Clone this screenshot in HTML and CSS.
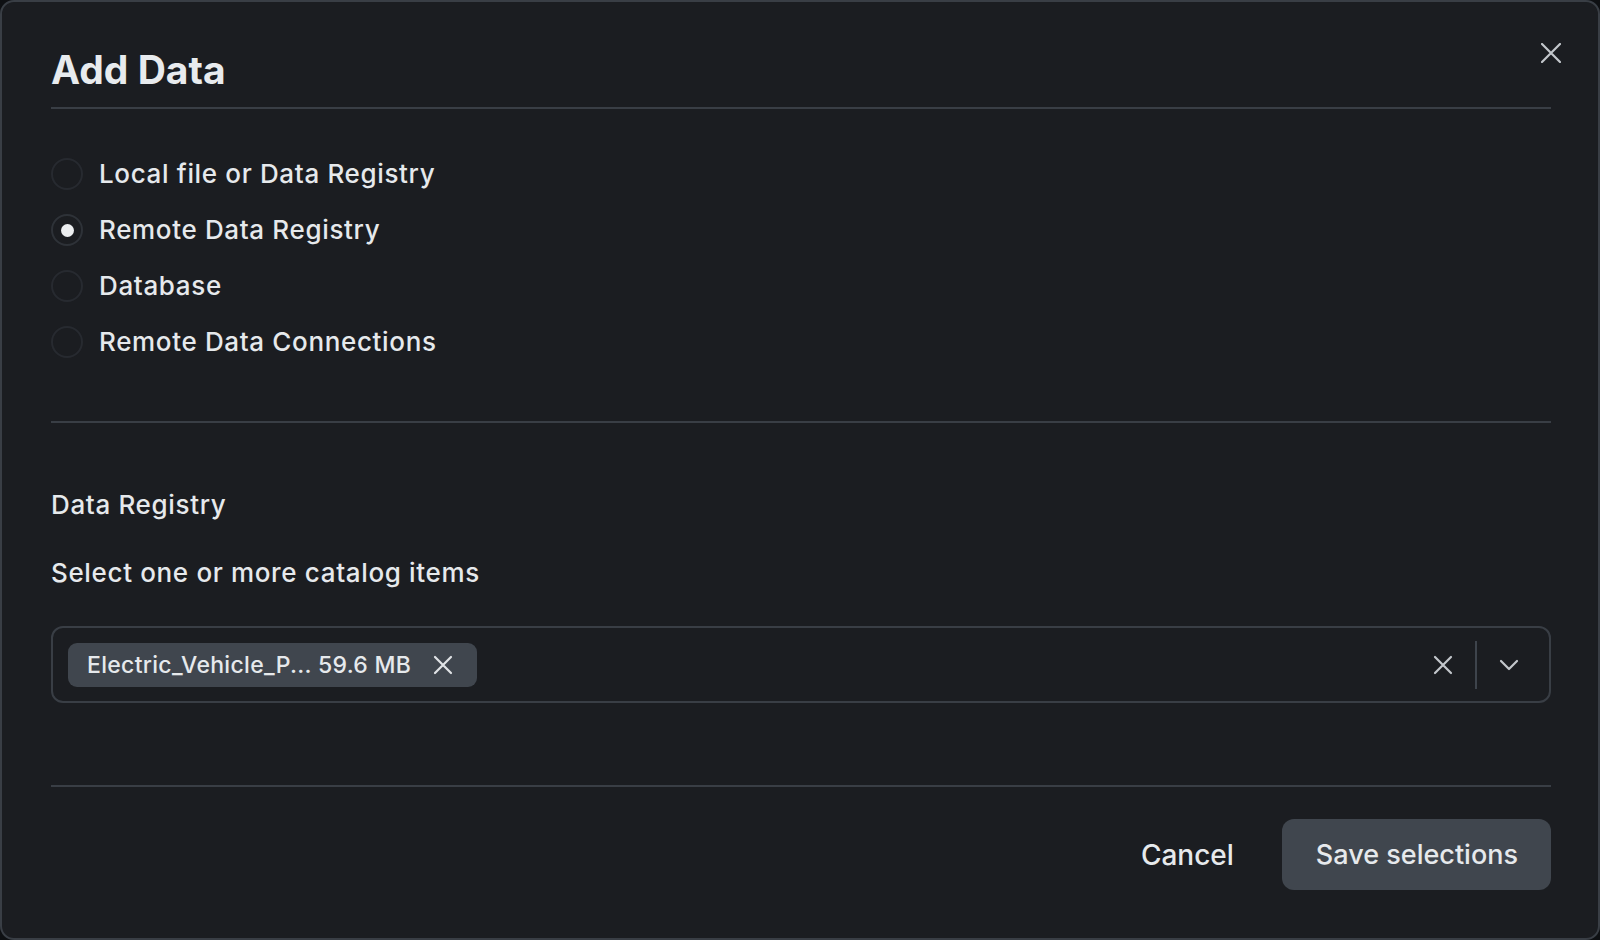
FILE: index.html
```html
<!DOCTYPE html>
<html lang="en">
<head>
<meta charset="utf-8">
<title>Add Data</title>
<link rel="stylesheet" href="styles.css">
</head>
<body>
<div class="modal">
  <header class="modal-header">
    <h1 class="title">Add Data</h1>
    <button class="close" aria-label="Close">
      <svg width="20" height="20" viewBox="0 0 20 20"><path d="M1 1L19 19M19 1L1 19" stroke="currentColor" stroke-width="2.2" stroke-linecap="round"/></svg>
    </button>
  </header>

  <div class="radios">
    <label class="radio"><span class="dot"></span><span class="radio-label">Local file or Data Registry</span></label>
    <label class="radio checked"><span class="dot"></span><span class="radio-label">Remote Data Registry</span></label>
    <label class="radio"><span class="dot"></span><span class="radio-label">Database</span></label>
    <label class="radio"><span class="dot"></span><span class="radio-label">Remote Data Connections</span></label>
  </div>

  <div class="divider"></div>

  <section class="registry">
    <div class="section-title">Data Registry</div>
    <div class="section-sub">Select one or more catalog items</div>
    <div class="select">
      <div class="chips">
        <span class="chip">
          <span class="chip-text">Electric_Vehicle_P... 59.6 MB</span>
          <svg class="chip-x" width="20" height="20" viewBox="0 0 20 20"><path d="M2 2L18 18M18 2L2 18" stroke="currentColor" stroke-width="2.2" stroke-linecap="round"/></svg>
        </span>
      </div>
      <div class="indicators">
        <svg class="clear" width="20" height="20" viewBox="0 0 20 20"><path d="M2 2L18 18M18 2L2 18" stroke="currentColor" stroke-width="2.2" stroke-linecap="round"/></svg>
        <span class="sep"></span>
        <svg class="chev" width="20" height="12" viewBox="0 0 20 12"><path d="M2 2L10 10L18 2" fill="none" stroke="currentColor" stroke-width="2.2" stroke-linecap="round" stroke-linejoin="round"/></svg>
      </div>
    </div>
  </section>

  <div class="divider footer-divider"></div>

  <footer class="footer">
    <button class="btn-text">Cancel</button>
    <button class="btn-primary">Save selections</button>
  </footer>
</div>
</body>
</html>
```

FILE: styles.css
```css
* { box-sizing: border-box; }
html, body { margin: 0; padding: 0; }
body {
  background: #0e1013;
  font-family: Inter, "DejaVu Sans", sans-serif;
  color: #e6e9ec;
  width: 1600px;
  height: 940px;
  overflow: hidden;
}
.modal {
  width: 1600px;
  height: 940px;
  background: #1b1d21;
  border: 2px solid #393e45;
  border-radius: 14px;
  padding: 0 47px 0 49px;
  display: flex;
  flex-direction: column;
}
.modal-header {
  display: flex;
  justify-content: space-between;
  align-items: flex-start;
  padding-top: 39px;
  padding-bottom: 15px;
  border-bottom: 2px solid #393e45;
}
.title {
  margin: 7px 0 0 0;
  font-size: 39px;
  line-height: 44px;
  font-weight: 700;
  letter-spacing: 0;
  color: #e8ebee;
}
.close {
  background: none;
  border: 0;
  padding: 0;
  width: 24px;
  height: 24px;
  margin-right: -12px;
  color: #c3c7cc;
  display: flex;
  align-items: center;
  justify-content: center;
}
.radios {
  margin-top: 37px;
  display: flex;
  flex-direction: column;
}
.radio {
  height: 56px;
  display: flex;
  align-items: center;
  gap: 16px;
}
.dot {
  width: 32px;
  height: 32px;
  border-radius: 50%;
  border: 2px solid #272a30;
  display: flex;
  align-items: center;
  justify-content: center;
}
.radio.checked .dot { border-color: #2e3238; }
.radio.checked .dot::after {
  content: "";
  width: 13px;
  height: 13px;
  border-radius: 50%;
  background: #eceef0;
}
.radio-label,
.section-title,
.section-sub {
  font-size: 26px;
  line-height: 32px;
  font-weight: 500;
  letter-spacing: 0.65px;
  color: #e6e9ec;
}
.divider {
  height: 2px;
  background: #393e45;
  margin-top: 51px;
}
.registry {
  display: flex;
  flex-direction: column;
}
.section-title { margin-top: 66px; }
.section-sub { margin-top: 36px; }
.select {
  margin-top: 37px;
  height: 77px;
  border: 2px solid #393e45;
  border-radius: 12px;
  display: flex;
  align-items: center;
  justify-content: space-between;
  padding: 0 30px 0 15px;
}
.chip {
  display: inline-flex;
  align-items: center;
  height: 44px;
  background: #40464e;
  border-radius: 9px;
  padding: 0 24px 0 19px;
  gap: 22px;
}
.chip-text {
  font-size: 23px;
  font-weight: 500;
  letter-spacing: 0.3px;
  color: #e6e9ec;
}
.chip-x { color: #e0e3e6; }
.indicators {
  display: flex;
  align-items: center;
  color: #c3c7cc;
}
.sep {
  width: 2px;
  height: 48px;
  background: #3e444c;
  margin: 0 22px 0 22px;
}
.footer-divider { margin-top: 82px; }
.footer {
  margin-top: 32px;
  display: flex;
  justify-content: flex-end;
  align-items: center;
  gap: 24px;
}
.btn-text {
  background: none;
  border: 0;
  font-family: inherit;
  font-size: 28px;
  font-weight: 500;
  color: #e6e9ec;
  padding: 0 24px;
  height: 71px;
}
.btn-primary {
  background: #40464e;
  border: 0;
  border-radius: 12px;
  height: 71px;
  padding: 0 33px 0 34px;
  font-family: inherit;
  font-size: 27px;
  font-weight: 500;
  color: #e6e9ec;
}
```
